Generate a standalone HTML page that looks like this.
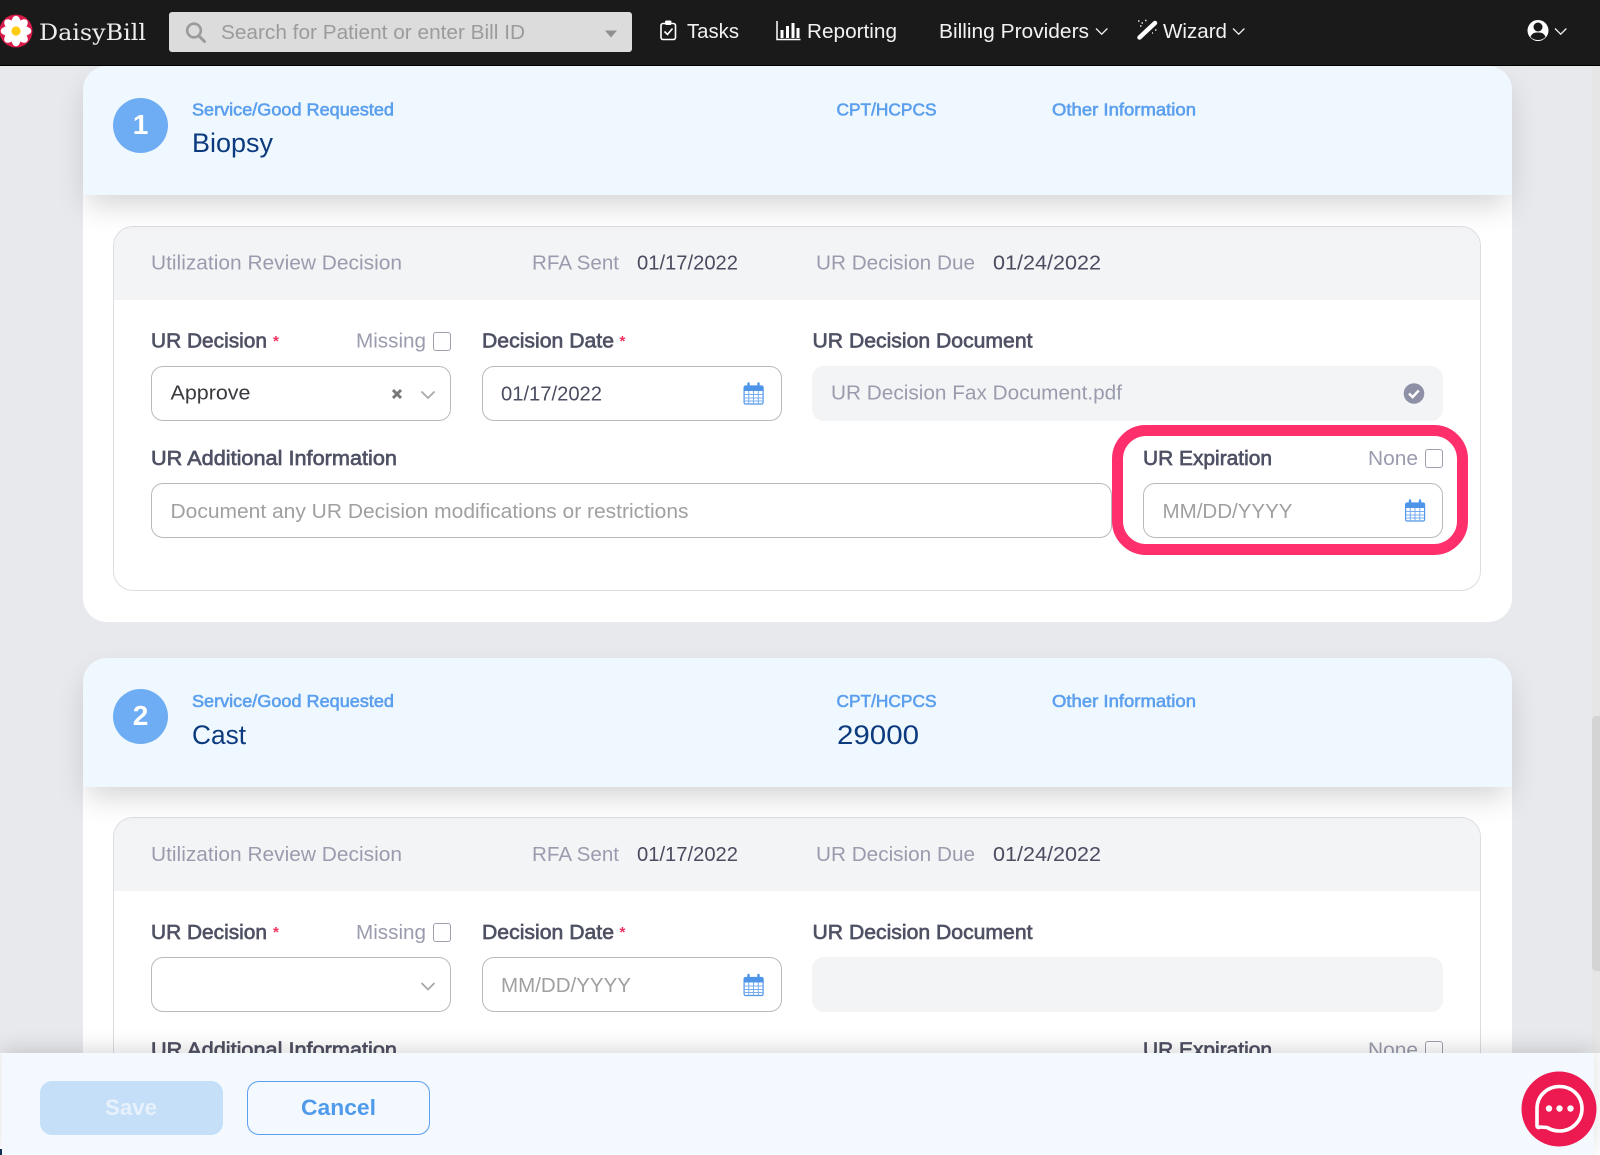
<!DOCTYPE html>
<html lang="en"><head><meta charset="utf-8"><title>DaisyBill</title>
<style>
html,body{margin:0;padding:0;width:1600px;height:1155px;overflow:hidden;background:#e8e9ed;font-family:"Liberation Sans",sans-serif}
#p{position:relative;width:1600px;height:1155px;overflow:hidden;background:#e8e9ed}
#p div{position:absolute;box-sizing:border-box}
svg{position:absolute;left:0;top:0}
text{font-family:"Liberation Sans",sans-serif}
.card{left:82.5px;width:1429px;background:#fff;border-radius:24px;z-index:0}
.hdr{left:82.5px;width:1429px;height:129px;background:#f0f8ff;border-radius:24px 24px 0 0;box-shadow:0 14px 30px -4px rgba(0,0,0,.17);z-index:1}
.box{left:113px;width:1368px;background:#fff;border:1.5px solid #dcdde2;border-radius:20px;overflow:hidden}
.bh{left:0;top:0;width:100%;height:73px;background:#f3f4f6}
.f{background:#fff;border:1.5px solid #bababa;border-radius:12px;height:55px;z-index:1}
.g{background:#f3f4f6;border-radius:12px;height:55px;z-index:1}
.c{width:18px;height:19px;background:#fff;border:1.5px solid #9ea0b0;border-radius:3px;z-index:1}
.n{width:55px;height:55px;border-radius:50%;background:#6eadf3;left:113px;z-index:2}
</style></head><body>
<div id="p">

<div class="card" style="top:66px;height:555.5px"></div>
<div class="box" style="top:226px;height:365px"><div class="bh"></div></div>
<div class="hdr" style="top:66px"></div>
<div class="n" style="top:97.5px"></div>
<div class="f" style="left:151px;top:366px;width:300px"></div>
<div class="f" style="left:482px;top:366px;width:300px"></div>
<div class="g" style="left:812px;top:366px;width:631px"></div>
<div class="f" style="left:151px;top:483px;width:961px"></div>
<div class="f" style="left:1143px;top:483px;width:300px"></div>
<div class="c" style="left:433px;top:332px"></div>
<div class="c" style="left:1425px;top:449px"></div>
<div style="left:1111.5px;top:425px;width:356px;height:130px;border:11px solid #fe2f6b;border-radius:34px;z-index:1"></div>

<div class="card" style="top:657.5px;height:497.5px;border-radius:24px 24px 0 0"></div>
<div class="box" style="top:817px;height:338px;border-radius:20px 20px 0 0"><div class="bh"></div></div>
<div class="hdr" style="top:657.5px"></div>
<div class="n" style="top:688.5px"></div>
<div class="f" style="left:151px;top:957px;width:300px"></div>
<div class="f" style="left:482px;top:957px;width:300px"></div>
<div class="g" style="left:812px;top:957px;width:631px"></div>
<div class="c" style="left:433px;top:923px"></div>
<div class="c" style="left:1425px;top:1041px"></div>

<div style="left:1592px;top:65px;width:8px;height:1090px;background:#e6e6e6;z-index:1"></div>
<div style="left:1592px;top:716px;width:8px;height:255px;background:#d4d4d4;border-radius:4px 0 0 4px;z-index:1"></div>

<svg width="1600" height="1155" style="z-index:2">
<defs>
<g id="cal">
<rect x="0.6" y="3" width="19" height="18" rx="1.5" fill="#fff" stroke="#4e94e8" stroke-width="1.2"/>
<rect x="0.6" y="3" width="19" height="5" fill="#4e94e8"/>
<path d="M5 0.5v5M15 0.5v5" stroke="#4e94e8" stroke-width="2.4" stroke-linecap="round"/>
<path d="M0.6 11.5h19M0.6 15h19M0.6 18h19M5.3 8v13M10 8v13M14.8 8v13" stroke="#76adf0" stroke-width="1"/>
</g>
<path id="chv" d="M0 0l6.5 6.5 6.5-6.5" fill="none" stroke="#a9a9a9" stroke-width="1.8"/>
</defs>

<!-- Card 1 -->
<text x="140.5" y="134" text-anchor="middle" font-size="28" font-weight="700" fill="#fff">1</text>
<g fill="#5b9fee" stroke="#5b9fee" stroke-width=".6" font-size="17.5">
<text x="192" y="115.5" textLength="202" lengthAdjust="spacingAndGlyphs">Service/Good Requested</text>
<text x="836.5" y="115.5" textLength="100" lengthAdjust="spacingAndGlyphs">CPT/HCPCS</text>
<text x="1052" y="115.5" textLength="144" lengthAdjust="spacingAndGlyphs">Other Information</text>
</g>
<text x="192" y="152" font-size="26.5" fill="#0b3a7e" textLength="81" lengthAdjust="spacingAndGlyphs">Biopsy</text>
<g font-size="20" fill="#9a9cae">
<text x="151" y="269.5" textLength="251" lengthAdjust="spacingAndGlyphs">Utilization Review Decision</text>
<text x="532" y="269.5" textLength="87" lengthAdjust="spacingAndGlyphs">RFA Sent</text>
<text x="816" y="269.5" textLength="159" lengthAdjust="spacingAndGlyphs">UR Decision Due</text>
<text x="356" y="347.5" textLength="70" lengthAdjust="spacingAndGlyphs">Missing</text>
<text x="1368" y="465" textLength="50" lengthAdjust="spacingAndGlyphs">None</text>
<text x="831" y="399.5" textLength="291" lengthAdjust="spacingAndGlyphs">UR Decision Fax Document.pdf</text>
</g>
<g font-size="20" fill="#4a4c60">
<text x="637" y="269.5" textLength="101" lengthAdjust="spacingAndGlyphs">01/17/2022</text>
<text x="993" y="269.5" textLength="108" lengthAdjust="spacingAndGlyphs">01/24/2022</text>
<text x="501" y="400.5" textLength="101" lengthAdjust="spacingAndGlyphs">01/17/2022</text>
</g>
<g font-size="20.5" fill="#4f5164" stroke="#4f5164" stroke-width=".65">
<text x="151" y="347.5" textLength="116" lengthAdjust="spacingAndGlyphs">UR Decision</text>
<text x="482" y="347.5" textLength="132" lengthAdjust="spacingAndGlyphs">Decision Date</text>
<text x="812.5" y="347.5" textLength="220" lengthAdjust="spacingAndGlyphs">UR Decision Document</text>
<text x="151" y="465" textLength="246" lengthAdjust="spacingAndGlyphs">UR Additional Information</text>
<text x="1143" y="465" textLength="129" lengthAdjust="spacingAndGlyphs">UR Expiration</text>
</g>
<g font-size="15" font-weight="700" fill="#f0305f">
<text x="273" y="346">*</text><text x="619.5" y="346">*</text>
</g>
<text x="170.5" y="399.5" font-size="20" fill="#3a3a3f" textLength="80" lengthAdjust="spacingAndGlyphs">Approve</text>
<g font-size="20" fill="#a0a0a0">
<text x="170.5" y="518" textLength="518" lengthAdjust="spacingAndGlyphs">Document any UR Decision modifications or restrictions</text>
<text x="1162.5" y="518" textLength="130" lengthAdjust="spacingAndGlyphs">MM/DD/YYYY</text>
</g>
<path d="M393 390l8 8M401 390l-8 8" stroke="#777" stroke-width="3"/>
<use href="#chv" x="421.5" y="391.5"/>
<use href="#cal" x="743.5" y="383"/>
<use href="#cal" x="1405" y="500"/>
<circle cx="1414" cy="393.5" r="10.3" fill="#8e90a6"/>
<path d="M1409 393.5l3.6 3.6 6.2-6.6" fill="none" stroke="#fff" stroke-width="2.4"/>

<!-- Card 2 -->
<text x="140.5" y="725" text-anchor="middle" font-size="28" font-weight="700" fill="#fff">2</text>
<g fill="#5b9fee" stroke="#5b9fee" stroke-width=".6" font-size="17.5">
<text x="192" y="707" textLength="202" lengthAdjust="spacingAndGlyphs">Service/Good Requested</text>
<text x="836.5" y="707" textLength="100" lengthAdjust="spacingAndGlyphs">CPT/HCPCS</text>
<text x="1052" y="707" textLength="144" lengthAdjust="spacingAndGlyphs">Other Information</text>
</g>
<text x="192" y="744" font-size="26.5" fill="#0b3a7e" textLength="54" lengthAdjust="spacingAndGlyphs">Cast</text>
<text x="837" y="744" font-size="26.5" fill="#0b3a7e" textLength="82" lengthAdjust="spacingAndGlyphs">29000</text>
<g font-size="20" fill="#9a9cae">
<text x="151" y="861" textLength="251" lengthAdjust="spacingAndGlyphs">Utilization Review Decision</text>
<text x="532" y="861" textLength="87" lengthAdjust="spacingAndGlyphs">RFA Sent</text>
<text x="816" y="861" textLength="159" lengthAdjust="spacingAndGlyphs">UR Decision Due</text>
<text x="356" y="939" textLength="70" lengthAdjust="spacingAndGlyphs">Missing</text>
<text x="1368" y="1056.5" textLength="50" lengthAdjust="spacingAndGlyphs">None</text>
</g>
<g font-size="20" fill="#4a4c60">
<text x="637" y="861" textLength="101" lengthAdjust="spacingAndGlyphs">01/17/2022</text>
<text x="993" y="861" textLength="108" lengthAdjust="spacingAndGlyphs">01/24/2022</text>
</g>
<g font-size="20.5" fill="#4f5164" stroke="#4f5164" stroke-width=".65">
<text x="151" y="939" textLength="116" lengthAdjust="spacingAndGlyphs">UR Decision</text>
<text x="482" y="939" textLength="132" lengthAdjust="spacingAndGlyphs">Decision Date</text>
<text x="812.5" y="939" textLength="220" lengthAdjust="spacingAndGlyphs">UR Decision Document</text>
<text x="151" y="1056.5" textLength="246" lengthAdjust="spacingAndGlyphs">UR Additional Information</text>
<text x="1143" y="1056.5" textLength="129" lengthAdjust="spacingAndGlyphs">UR Expiration</text>
</g>
<g font-size="15" font-weight="700" fill="#f0305f">
<text x="273" y="937">*</text><text x="619.5" y="937">*</text>
</g>
<text x="501" y="992" font-size="20" fill="#a0a0a0" textLength="130" lengthAdjust="spacingAndGlyphs">MM/DD/YYYY</text>
<use href="#chv" x="421.5" y="983"/>
<use href="#cal" x="743.5" y="974.5"/>
</svg>

<!-- Nav -->
<div style="left:0;top:0;width:1600px;height:65.5px;background:#1a1a1a;border-bottom:1px solid #000;z-index:4">
<div style="left:169px;top:12px;width:463px;height:40px;background:#dcdcdc;border-radius:3px"></div>
<svg width="1600" height="65">
<circle cx="16" cy="31" r="16.5" fill="#d81b4a"/>
<g fill="#fff">
<ellipse cx="16" cy="22.7" rx="4.6" ry="7"/>
<ellipse cx="16" cy="22.7" rx="4.6" ry="7" transform="rotate(45 16 31)"/>
<ellipse cx="16" cy="22.7" rx="4.6" ry="7" transform="rotate(90 16 31)"/>
<ellipse cx="16" cy="22.7" rx="4.6" ry="7" transform="rotate(135 16 31)"/>
<ellipse cx="16" cy="22.7" rx="4.6" ry="7" transform="rotate(180 16 31)"/>
<ellipse cx="16" cy="22.7" rx="4.6" ry="7" transform="rotate(225 16 31)"/>
<ellipse cx="16" cy="22.7" rx="4.6" ry="7" transform="rotate(270 16 31)"/>
<ellipse cx="16" cy="22.7" rx="4.6" ry="7" transform="rotate(315 16 31)"/>
</g>
<circle cx="16" cy="31" r="4.6" fill="#fc1"/>
<text x="39" y="40" font-size="22.5" fill="#eee" style="font-family:'DejaVu Serif',serif" textLength="107" lengthAdjust="spacingAndGlyphs">DaisyBill</text>

<circle cx="194" cy="30.5" r="6.8" fill="none" stroke="#9b9b9b" stroke-width="2.6"/>
<path d="M199 36l5.5 5.5" stroke="#9b9b9b" stroke-width="3" stroke-linecap="round"/>
<text x="221" y="39" font-size="20.5" fill="#9b9b9b" textLength="304" lengthAdjust="spacingAndGlyphs">Search for Patient or enter Bill ID</text>
<path d="M605 30.5h12l-6 7z" fill="#8f8f8f"/>

<rect x="661" y="23.5" width="14.5" height="16" rx="2" fill="none" stroke="#fff" stroke-width="1.6"/>
<rect x="665" y="20.5" width="6.5" height="4.5" rx="1.5" fill="#fff"/>
<path d="M664.5 31.5l3 3 5-6" fill="none" stroke="#fff" stroke-width="1.6"/>
<text x="687" y="38" font-size="20" fill="#f2f2f2" textLength="52" lengthAdjust="spacingAndGlyphs">Tasks</text>

<path d="M777 21v18.5h23.5" fill="none" stroke="#fff" stroke-width="1.5"/>
<path d="M782 30v8M787.5 26v12M793 23v15M798 28v10" stroke="#fff" stroke-width="3"/>
<text x="807" y="38" font-size="20" fill="#f2f2f2" textLength="90" lengthAdjust="spacingAndGlyphs">Reporting</text>
<text x="939" y="38" font-size="20" fill="#f2f2f2" textLength="150" lengthAdjust="spacingAndGlyphs">Billing Providers</text>
<path d="M1096 28.5l5.7 5.7 5.7-5.7" fill="none" stroke="#eee" stroke-width="1.3"/>

<path d="M1139.5 37.5l15.500-14.500" stroke="#fff" stroke-width="4.500" stroke-linecap="round"/>
<path d="M1138 21h1.500M1141.500 23h1.500M1145 20.500h1.500M1140 26h1.500M1155 30h1.500M1152 33h1" stroke="#ddd" stroke-width="1.500"/>
<text x="1163" y="38" font-size="20" fill="#f2f2f2" textLength="64" lengthAdjust="spacingAndGlyphs">Wizard</text>
<path d="M1233 28.5l5.7 5.7 5.7-5.7" fill="none" stroke="#eee" stroke-width="1.3"/>

<circle cx="1538" cy="30.5" r="10.5" fill="#fff"/>
<circle cx="1538" cy="27" r="4.5" fill="#1a1a1a"/>
<path d="M1530.5 37c1.5-4 4-4.5 7.5-4.5s6 .5 7.5 4.5c-2 2-4.500 3-7.500 3s-5.500-1-7.500-3z" fill="#1a1a1a"/>
<path d="M1555 28.5l5.7 5.7 5.7-5.700" fill="none" stroke="#eee" stroke-width="1.3"/>
</svg>
</div>

<!-- Footer -->
<div style="left:0;top:1053px;width:1600px;height:102px;background:#fff;z-index:3"></div>
<div style="left:0;top:1149px;width:2px;height:6px;background:#13305a;z-index:3"></div>
<div style="left:2px;top:1053px;width:1592px;height:102px;background:#f3f9fe;box-shadow:0 -6px 18px rgba(0,0,0,.13);z-index:3">
<div style="left:37.5px;top:27.5px;width:183px;height:54.5px;background:#c5dff8;border-radius:12px"></div>
<div style="left:245px;top:27.5px;width:183px;height:54.5px;border:1.5px solid #5b9fee;border-radius:12px"></div>
</div>
<svg width="1600" height="1155" style="z-index:3">
<text x="105" y="1115" font-size="22" font-weight="700" fill="#e6f1fc" textLength="52" lengthAdjust="spacingAndGlyphs">Save</text>
<text x="301" y="1115" font-size="22" font-weight="700" fill="#4f9aea" textLength="75" lengthAdjust="spacingAndGlyphs">Cancel</text>
<circle cx="1559" cy="1109" r="37.5" fill="#ec1a50"/>
<path d="M1540 1127c-1.5 1-3 .5-3-1.5v-17c0-12.5 10-22 22.5-22s22.500 9.500 22.500 22-10 22.500-22.500 22.500c-4.500 0-9-1.500-12.500-3.500z" fill="none" stroke="#fff" stroke-width="3.600" stroke-linejoin="round"/>
<circle cx="1549" cy="1108.5" r="3.200" fill="#fff"/>
<circle cx="1559.5" cy="1108.5" r="3.200" fill="#fff"/>
<circle cx="1570.5" cy="1108.5" r="3.200" fill="#fff"/>
</svg>
</div>
</body></html>
